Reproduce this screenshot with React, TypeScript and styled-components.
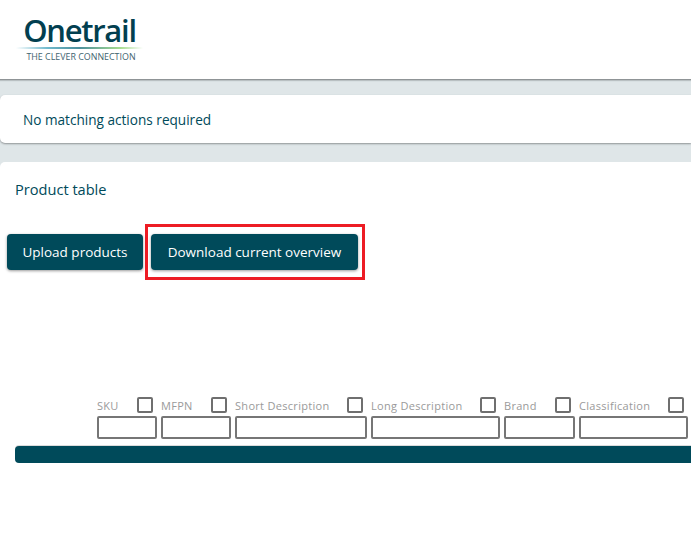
import styled, { createGlobalStyle } from "styled-components";

const columns = [
  { label: "SKU", width: 60 },
  { label: "MFPN", width: 70 },
  { label: "Short Description", width: 132 },
  { label: "Long Description", width: 129 },
  { label: "Brand", width: 71 },
  { label: "Classification", width: 109 },
];

const App = () => {
  return (
    <>
      <GlobalStyle />
      <Page>
        <Header>
          <Logo>
            <LogoName>Onetrail</LogoName>
            <LogoLine />
            <LogoTag>THE CLEVER CONNECTION</LogoTag>
          </Logo>
        </Header>
        <NoticeCard>No matching actions required</NoticeCard>
        <ProductCard>
          <CardTitle>Product table</CardTitle>
          <Actions>
            <Button $width={136}>Upload products</Button>
            <Highlighted>
              <Button $width={207}>Download current overview</Button>
            </Highlighted>
          </Actions>
          <FilterRow>
            {columns.map((col) => (
              <FilterCol key={col.label} $width={col.width}>
                <FilterHead>
                  <FilterLabel>{col.label}</FilterLabel>
                  <Check type="checkbox" />
                </FilterHead>
                <FilterInput />
              </FilterCol>
            ))}
          </FilterRow>
          <TableBar />
        </ProductCard>
      </Page>
    </>
  );
};

const GlobalStyle = createGlobalStyle`
  html, body {
    margin: 0;
    padding: 0;
    height: 100%;
    overflow: hidden;
    background: #fff;
  }
  * {
    box-sizing: border-box;
  }
`;

const Page = styled.div`
  width: 691px;
  height: 533px;
  overflow: hidden;
  background: #dfe6e8;
  font-family: "Open Sans", "Noto Sans", sans-serif;
  color: #004a5a;
`;

const Header = styled.header`
  height: 80px;
  padding: 15px 0 0 16px;
  background: #fff;
  border-bottom: 1px solid #8f9496;
  box-shadow: 0 1px 1px #b9c0c2;
  margin-bottom: 15px;
`;

const Logo = styled.div`
  width: 127px;
  display: flex;
  flex-direction: column;
  align-items: center;
`;

const LogoName = styled.div`
  font-family: "Open Sans", sans-serif;
  font-weight: 600;
  font-size: 31px;
  line-height: 30px;
  letter-spacing: -1.3px;
  color: #023f50;
`;

const LogoLine = styled.div`
  width: 127px;
  height: 2px;
  margin-top: 2px;
  background: linear-gradient(90deg, #ffffff 0%, #6fb9cc 25%, #4d8f9c 50%, #a6dc8f 82%, #ffffff 100%);
`;

const LogoTag = styled.div`
  margin-top: 3px;
  padding-left: 3px;
  font-size: 8.9px;
  line-height: 10px;
  white-space: nowrap;
  color: #3f6470;
`;

const NoticeCard = styled.section`
  height: 48px;
  padding-left: 23px;
  display: flex;
  align-items: center;
  font-size: 13.6px;
  background: #fff;
  border-radius: 5px 0 0 5px;
  box-shadow: 0 1px 2px #8f9496;
  margin-bottom: 19px;
`;

const ProductCard = styled.section`
  height: 371px;
  background: #fff;
  border-radius: 5px 0 0 0;
  padding: 17px 0 0 15px;
`;

const CardTitle = styled.h2`
  margin: 0;
  font-size: 14.6px;
  font-weight: 400;
  line-height: 20px;
`;

const Actions = styled.div`
  display: flex;
  gap: 8px;
  margin: 35px 0 0 -8px;
`;

const Button = styled.button<{ $width: number }>`
  width: ${(p) => p.$width}px;
  height: 36px;
  padding: 0;
  border: none;
  border-radius: 4px;
  background: #004a5a;
  color: #fff;
  font-family: inherit;
  font-size: 13.5px;
  white-space: nowrap;
  box-shadow: 0 1px 3px rgba(0, 0, 0, 0.4);
`;

const Highlighted = styled.div`
  position: relative;

  &::after {
    content: "";
    position: absolute;
    inset: -10px -7px -10px -6px;
    border: 3px solid #ed1c24;
    pointer-events: none;
  }
`;

const FilterRow = styled.div`
  display: flex;
  gap: 4px;
  margin: 125px 0 0 82px;
`;

const FilterCol = styled.div<{ $width: number }>`
  flex: 0 0 ${(p) => p.$width}px;
  width: ${(p) => p.$width}px;
`;

const FilterHead = styled.div`
  height: 20px;
  display: flex;
  align-items: center;
  justify-content: space-between;
  padding-right: 4px;
`;

const FilterLabel = styled.span`
  font-size: 11px;
  letter-spacing: 0.3px;
  color: #9a9a9a;
  white-space: nowrap;
`;

const Check = styled.input`
  appearance: none;
  width: 16px;
  height: 16px;
  margin: 0;
  background: #fff;
  border: 2px solid #6f6f6f;
  border-radius: 2px;
`;

const FilterInput = styled.input`
  display: block;
  width: 100%;
  height: 23px;
  margin-top: 1px;
  background: #fff;
  border: 2px solid #767676;
  border-radius: 2px;
`;

const TableBar = styled.div`
  height: 17px;
  margin-top: 7px;
  background: #004a5a;
  border-radius: 4px 0 0 4px;
  box-shadow: 0 -1px 0 #dcdcdc;
`;

export default App;
